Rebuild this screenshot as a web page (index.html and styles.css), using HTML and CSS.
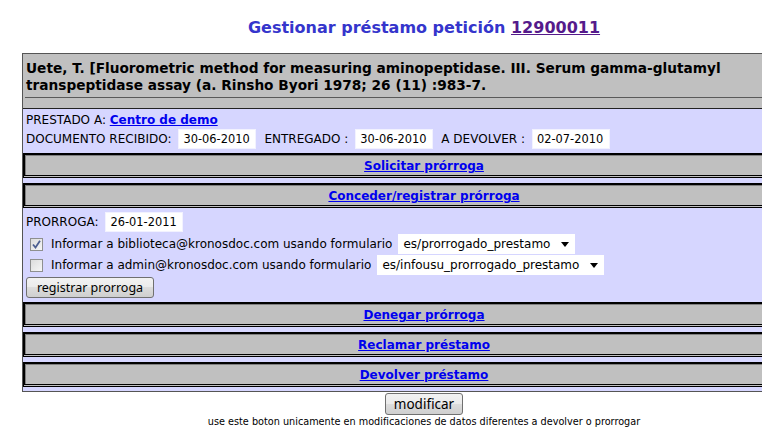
FILE: index.html
```html
<!DOCTYPE html>
<html lang="es">
<head>
  <meta charset="UTF-8">
  <title>Gestionar préstamo</title>
  <link rel="stylesheet" href="styles.css">
</head>
<body>

  <div class="page">

    <!-- Titulo -->
    <h1 class="title">Gestionar préstamo petición <a href="#" class="req">12900011</a></h1>

    <div class="loan">

      <!-- Referencia -->
      <div class="citation">
        Uete, T. [Fluorometric method for measuring aminopeptidase. III. Serum gamma-glutamyl transpeptidase assay (a. Rinsho Byori 1978; 26 (11) :983-7.
        <hr>
      </div>

      <!-- Datos del prestamo -->
      <div class="panel">
        <div class="line">PRESTADO A:&nbsp;<a href="#" class="link">Centro de demo</a></div>
        <div class="line">
          <span>DOCUMENTO RECIBIDO:</span>
          <input type="text" class="date" value="30-06-2010">
          <span>ENTREGADO :</span>
          <input type="text" class="date" value="30-06-2010">
          <span>A DEVOLVER :</span>
          <input type="text" class="date" value="02-07-2010">
        </div>
      </div>

      <div class="action"><a href="#" class="link">Solicitar prórroga</a></div>
      <div class="strip"></div>

      <div class="action"><a href="#" class="link">Conceder/registrar prórroga</a></div>

      <!-- Prorroga -->
      <div class="panel extend">
        <div class="line">
          <span>PRORROGA:</span>
          <input type="text" class="date" value="26-01-2011">
        </div>
        <div class="line check-line">
          <span class="check checked">
            <svg width="9" height="9" viewBox="0 0 9 9"><path d="M1 4.5 L3.5 7.5 L8 0.8" fill="none" stroke="#4d5f91" stroke-width="1.8"/></svg>
          </span>
          <span>Informar a biblioteca@kronosdoc.com usando formulario</span>
          <span class="select w1">
            <select>
              <option>es/prorrogado_prestamo</option>
            </select>
            <svg class="arrow" width="8" height="5" viewBox="0 0 8 5"><path d="M0 0 H8 L4 5 Z" fill="#000"/></svg>
          </span>
        </div>
        <div class="line check-line tight">
          <span class="check"></span>
          <span>Informar a admin@kronosdoc.com usando formulario</span>
          <span class="select w2">
            <select>
              <option>es/infousu_prorrogado_prestamo</option>
            </select>
            <svg class="arrow" width="8" height="5" viewBox="0 0 8 5"><path d="M0 0 H8 L4 5 Z" fill="#000"/></svg>
          </span>
        </div>
        <button class="btn register">registrar prorroga</button>
      </div>

      <div class="action"><a href="#" class="link">Denegar prórroga</a></div>
      <div class="strip"></div>

      <div class="action"><a href="#" class="link">Reclamar préstamo</a></div>
      <div class="strip"></div>

      <div class="action"><a href="#" class="link">Devolver préstamo</a></div>
      <div class="strip last"></div>

    </div>

    <div class="submit">
      <button class="btn modify">modificar</button>
      <div class="note">use este boton unicamente en modificaciones de datos diferentes a devolver o prorrogar</div>
    </div>

  </div>

</body>
</html>
```

FILE: styles.css
```css
html, body {
  overflow: hidden;
}

body {
  margin: 8px;
  font-family: "DejaVu Sans", Verdana, sans-serif;
  font-size: 12px;
  color: #000;
  background: #fff;
}

.page {
  width: 804px;
  margin-left: 14px;
}

/* Titulo */
.title {
  margin: 10px 0 15px;
  font-size: 16px;
  line-height: 20px;
  text-align: center;
  color: #3535cc;
}

.title .req {
  color: #551a8b;
}

/* Contenedor */
.loan {
  border: 1px solid #555;
  background: #d6d6ff;
}

.citation {
  background: #c0c0c0;
  padding: 6px 3px 0;
  font-size: 13.7px;
  font-weight: bold;
  line-height: 17px;
  border-bottom: 1px solid #222;
}

.citation hr {
  margin: 3px -1px 0;
  height: 10px;
  border: 0;
  border-top: 1px solid #5a5a5a;
}

.panel {
  padding: 2px 3px 4px;
}

.line {
  display: flex;
  align-items: center;
  height: 18px;
}

.line + .line {
  height: 20px;
}

.link {
  color: #0000ee;
  font-weight: bold;
  font-size: 12px;
}

.date {
  width: 78px;
  height: 20px;
  box-sizing: border-box;
  margin: 0 8px 0 7px;
  padding: 0 4px;
  border: 1px solid #f2f2ff;
  background: #fff;
  font-family: "DejaVu Sans", Verdana, sans-serif;
  font-size: 11.4px;
  color: #000;
}

/* Bloques de accion */
.action {
  height: 18px;
  line-height: 18px;
  padding-top: 2px;
  text-align: center;
  background: #c0c0c0;
  border: 2px solid #000;
  border-bottom: 3px double #000;
  box-shadow: inset 1px 1px 0 #808080;
}

.strip {
  height: 5px;
}

.strip.last {
  height: 4px;
}

/* Prorroga */
.extend {
  padding: 4px 3px 4px;
}

.extend .line {
  height: 20px;
}

.check-line {
  margin-top: 2px;
}

.check-line.tight {
  margin-top: 1px;
}

.check {
  display: inline-flex;
  align-items: center;
  justify-content: center;
  width: 11px;
  height: 11px;
  margin: 0 8px 0 4px;
  border: 1px solid #8e8f8f;
  background: linear-gradient(135deg, #dcdcdc, #f6f6f6);
}

.select {
  position: relative;
  display: inline-block;
  margin-left: 6px;
  height: 20px;
  background: #fff;
}

.select.w1 {
  width: 177px;
}

.select.w2 {
  width: 227px;
}

.select select {
  appearance: none;
  width: 100%;
  height: 20px;
  border: 0;
  padding: 0 0 0 5px;
  background: transparent;
  font-family: "DejaVu Sans", Verdana, sans-serif;
  font-size: 12px;
  color: #000;
}

.select .arrow {
  position: absolute;
  right: 6px;
  top: 8px;
}

.btn {
  font-family: "Noto Sans", "Open Sans", sans-serif;
  color: #000;
  border: 1px solid #707070;
  border-radius: 3px;
  background: linear-gradient(#f2f2f2, #ebebeb 50%, #dddddd 50%, #cfcfcf);
  padding: 0;
}

.register {
  display: block;
  width: 128px;
  height: 21px;
  margin-top: 2px;
  font-size: 12.5px;
}

/* Pie */
.submit {
  text-align: center;
}

.modify {
  width: 78px;
  height: 22px;
  margin-top: 1px;
  font-size: 13.5px;
}

.note {
  margin-top: 1px;
  font-size: 9.7px;
  line-height: 11px;
}
```
